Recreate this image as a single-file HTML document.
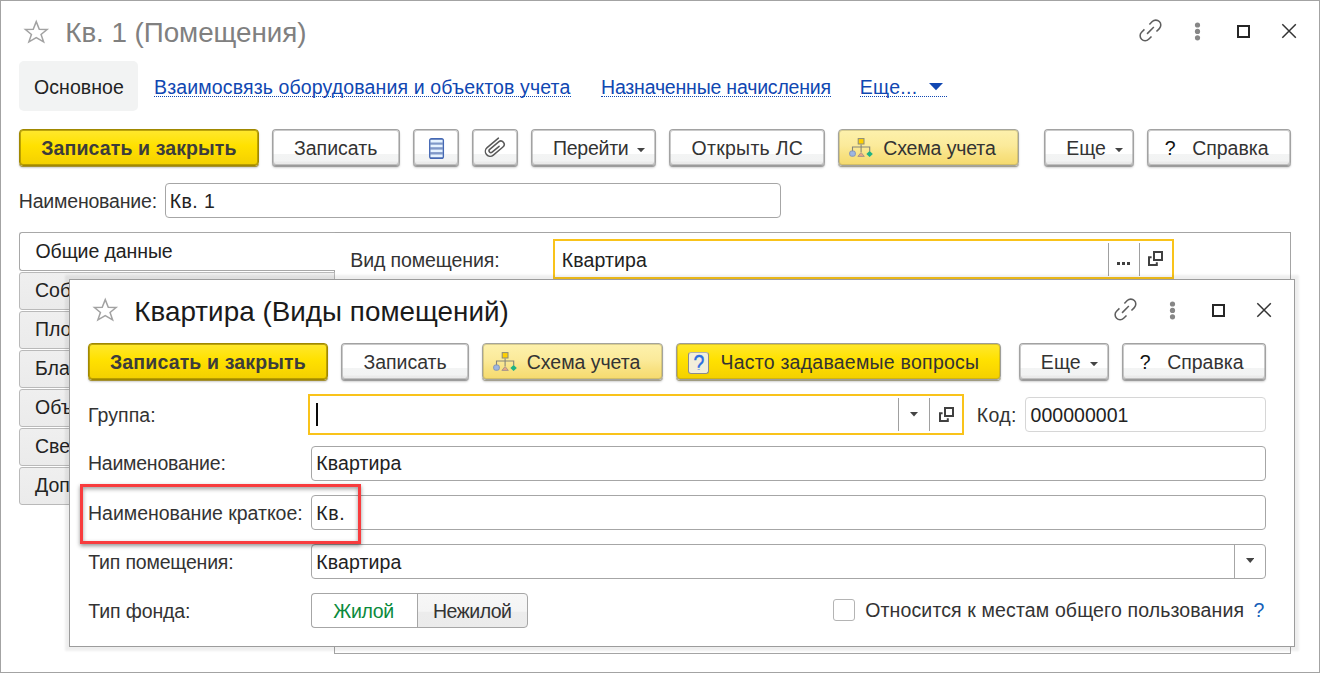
<!DOCTYPE html>
<html lang="ru">
<head>
<meta charset="utf-8">
<title>Кв. 1 (Помещения)</title>
<style>
*{box-sizing:border-box;margin:0;padding:0}
html,body{width:1320px;height:673px;overflow:hidden;background:#fff}
body{font-family:"Liberation Sans",sans-serif;font-size:19.5px;color:#333;position:relative}
.a{position:absolute}
.t{position:absolute;white-space:nowrap;line-height:1;font-size:19.5px}
.t.b{font-weight:bold}
.t.tt{font-size:27.8px}
.frame{position:absolute;left:0;top:0;width:1320px;height:673px;border:1px solid #a3a3a3}
.btn{position:absolute;height:37px;border:1px solid #a2a2a2;border-bottom-color:#9a9a9a;border-radius:4px;background:linear-gradient(#fff 0,#fff 24px,#f3f4f4 24px,#f2f3f3 31px,#ebebeb 32px,#eaeaea 100%);box-shadow:inset 0 0 0 1px rgba(150,150,150,.5),0 1px 0 #9c9c9c,0 2px 2px rgba(0,0,0,.18)}
.btn.y{background:linear-gradient(#ffe82e 0,#ffe100 45%,#fbd900 70%,#f2d000 100%);border-color:#a08800;box-shadow:inset 0 0 0 1px rgba(160,136,0,.7),0 1px 0 #a49030,0 2px 2px rgba(0,0,0,.2)}
.btn.ly{background:linear-gradient(#fdf1ad 0,#fbea9a 45%,#f8e283 70%,#f5da6e 100%);border-color:#a4a49c;box-shadow:inset 0 0 0 1px rgba(150,140,90,.35),0 1px 0 #a4a090,0 2px 2px rgba(0,0,0,.18)}
.btn.y2{background:linear-gradient(#ffe82e 0,#ffe100 45%,#fbd900 70%,#f2d000 100%);border-color:#9e9e98;box-shadow:inset 0 0 0 1px rgba(150,130,40,.35),0 1px 0 #a09c80,0 2px 2px rgba(0,0,0,.18)}
.inp{position:absolute;border:1px solid #a6a6a6;border-radius:4px;background:#fff}
.inp.f{border:2px solid #f9c31a;border-radius:0}
.vt{position:absolute;left:19px;width:316px;height:38px;border:1px solid #b9b9b9;border-radius:3px 0 0 3px;background:linear-gradient(#efefef,#ebebeb)}
.sep{position:absolute;width:1px;background:#a0a0a0}
.dlg{position:absolute;left:69px;top:279px;width:1226px;height:368px;background:#fff;border:1px solid #9c9c9c;box-shadow:0 0 2px 4px rgba(0,0,0,.065)}
</style>
</head>
<body>
<div class="frame"></div>

<svg class="a" style="left:20px;top:15px" width="32" height="32" viewBox="20 15 32 32"><path d="M36.25 21.64 L39.27 29.29 L47.09 29.47 L41.06 34.51 L43.59 41.80 L36.25 37.57 L28.91 41.80 L31.43 34.51 L25.41 29.47 L33.23 29.29 Z" fill="none" stroke="#a2a2a2" stroke-width="1.5" stroke-linejoin="miter"/></svg>
<div class="t tt" style="left:65.25px;top:19.0px;color:#808080;letter-spacing:-0.047px">Кв. 1 (Помещения)</div>
<svg class="a" style="left:1130px;top:10px" width="180" height="40" viewBox="1130 10 180 40">
<g transform="translate(1150.45 30.45) rotate(-45)" fill="none" stroke="#5e5e5e" stroke-width="1.55">
<path d="M3.5 -5 L7.55 -5 A5 5 0 0 1 7.55 5 L3.5 5"/>
<path d="M-3.5 5 L-7.55 5 A5 5 0 0 1 -7.55 -5 L-3.5 -5"/>
<path d="M-4.8 0 L4.8 0"/>
</g>
<circle cx="1197.5" cy="25" r="2.6" fill="#868686"/><circle cx="1197.5" cy="31.4" r="2.6" fill="#868686"/><circle cx="1197.5" cy="37.8" r="2.6" fill="#868686"/>
<rect x="1238" y="26" width="11" height="11" fill="none" stroke="#262626" stroke-width="2"/>
<path d="M1282.3 24.2 L1295.8 37.7 M1295.8 24.2 L1282.3 37.7" stroke="#333" stroke-width="1.5" fill="none"/>
</svg>
<div class="a" style="left:19px;top:61px;width:119px;height:50px;background:#f2f3f3;border-radius:5px"></div>
<div class="t" style="left:34.0px;top:78.0px;color:#222;letter-spacing:0.071px">Основное</div>
<div class="t" style="left:154.0px;top:78.0px;color:#1047b2;letter-spacing:0.138px">Взаимосвязь оборудования и объектов учета</div>
<div class="a" style="left:154px;top:96px;width:417px;height:0;border-top:1px dotted #1047b2"></div>
<div class="t" style="left:601.0px;top:78.0px;color:#1047b2;letter-spacing:-0.19px">Назначенные начисления</div>
<div class="a" style="left:601px;top:96px;width:230px;height:0;border-top:1px dotted #1047b2"></div>
<div class="t" style="left:859.75px;top:78.0px;color:#1047b2;letter-spacing:0.3px">Еще...</div>
<div class="a" style="left:860px;top:96px;width:87px;height:0;border-top:1px dotted #1047b2"></div>
<svg class="a" style="left:928.5px;top:83px" width="14" height="7.7" viewBox="0 0 14 7.7"><path d="M0 0 H14 L7.0 7.2 Z" fill="#1047b2"/></svg>
<div class="btn y" style="left:19px;top:129px;width:240px"></div>
<div class="btn " style="left:272px;top:129px;width:128px"></div>
<div class="btn " style="left:413px;top:129px;width:46px"></div>
<div class="btn " style="left:472px;top:129px;width:46px"></div>
<div class="btn " style="left:531px;top:129px;width:125px"></div>
<div class="btn " style="left:669px;top:129px;width:156px"></div>
<div class="btn ly" style="left:838px;top:129px;width:181px"></div>
<div class="btn " style="left:1044px;top:129px;width:90px"></div>
<div class="btn " style="left:1147px;top:129px;width:144px"></div>
<div class="t b" style="left:41.25px;top:139.0px;color:#3c3c3c;letter-spacing:0.118px">Записать и закрыть</div>
<div class="t" style="left:294.0px;top:139.0px;color:#333">Записать</div>
<div class="t" style="left:553.0px;top:139.0px;color:#333;letter-spacing:-0.25px">Перейти</div>
<div class="t" style="left:691.5px;top:139.0px;color:#333;letter-spacing:0.278px">Открыть ЛС</div>
<div class="t" style="left:883.25px;top:139.0px;color:#333;letter-spacing:-0.125px">Схема учета</div>
<div class="t" style="left:1066.3px;top:139.0px;color:#333;letter-spacing:-0.05px">Еще</div>
<div class="t" style="left:1164.75px;top:139.0px;color:#111">?</div>
<div class="t" style="left:1192.25px;top:139.0px;color:#333;letter-spacing:-0.042px">Справка</div>
<svg class="a" style="left:636.8px;top:147.7px" width="8" height="4.7" viewBox="0 0 8 4.7"><path d="M0 0 H8 L4.0 4.2 Z" fill="#444"/></svg>
<svg class="a" style="left:1115px;top:147.7px" width="8" height="4.7" viewBox="0 0 8 4.7"><path d="M0 0 H8 L4.0 4.2 Z" fill="#444"/></svg>
<svg class="a" style="left:848px;top:137px" width="26" height="21" viewBox="848 137.5 26 21">
<path d="M861.1 145 V152.5 M852.5 152 V147.5 H869.7 V152" fill="none" stroke="#86867a" stroke-width="1.1"/>
<rect x="858.2" y="139.1" width="5.8" height="5.4" fill="#ffd000" stroke="#8a8a78" stroke-width="1"/>
<rect x="849.7" y="151.5" width="5.6" height="5.2" rx="1.8" fill="#9db6e2" stroke="#8494b4" stroke-width="1"/>
<path d="M861.1 153 L864.3 156.9 H857.9 Z" fill="#e9a484" stroke="#a8988a" stroke-width="1"/>
<path d="M869.6 151.6 L872.8 154.5 L869.6 157.4 L866.4 154.5 Z" fill="#1fb283"/>
</svg>
<svg class="a" style="left:428px;top:137px" width="17" height="23" viewBox="428 137 17 23">
<rect x="429.6" y="138.6" width="13.9" height="19.8" rx="2" fill="#7f98c8" stroke="#4468b4" stroke-width="1.1"/>
<g fill="#e6f3ff"><rect x="430.6" y="140" width="11.9" height="2.5"/><rect x="430.6" y="144.7" width="11.9" height="2.5"/><rect x="430.6" y="149.6" width="11.9" height="2.5"/><rect x="430.6" y="154.5" width="11.9" height="2.5"/></g>
</svg>
<svg class="a" style="left:480px;top:133px" width="30" height="28" viewBox="480 133 30 28">
<g transform="translate(494.7 147.6) rotate(-40) scale(.93)" fill="none" stroke="#585858" stroke-width="1.6" stroke-linecap="round">
<path d="M9.6 -5.2 L-6.3 -5.2 A5.2 5.2 0 0 0 -6.3 5.2 L7.2 5.2 A3.6 3.6 0 0 0 7.2 -2 L-5.3 -2 A2 2 0 0 0 -5.3 2 L4.5 2"/>
</g></svg>
<div class="t" style="left:18.75px;top:191.5px;color:#333;letter-spacing:-0.188px">Наименование:</div>
<div class="inp" style="left:165px;top:183px;width:616px;height:35px"></div>
<div class="t" style="left:169.75px;top:191.5px;color:#222;letter-spacing:0.438px">Кв. 1</div>
<div class="a" style="left:334px;top:232px;width:957px;height:422px;border:1px solid #a4a4a4;border-left:none"></div>
<div class="a" style="left:19px;top:232px;width:316px;height:39px;border:1px solid #a8a8a8;border-right:none;border-radius:3px 0 0 3px"></div>
<div class="a" style="left:334px;top:271px;width:1px;height:383px;background:#a4a4a4"></div>
<div class="vt" style="top:272px"></div>
<div class="vt" style="top:311px"></div>
<div class="vt" style="top:350px"></div>
<div class="vt" style="top:389px"></div>
<div class="vt" style="top:428px"></div>
<div class="vt" style="top:467px"></div>
<div class="t" style="left:35.0px;top:280.8px;color:#222">Соб</div>
<div class="t" style="left:35.0px;top:319.8px;color:#222">Пло</div>
<div class="t" style="left:35.0px;top:358.8px;color:#222">Бла</div>
<div class="t" style="left:35.0px;top:397.8px;color:#222">Объ</div>
<div class="t" style="left:35.0px;top:436.8px;color:#222">Све</div>
<div class="t" style="left:35.1px;top:475.8px;color:#222">Доп</div>
<div class="t" style="left:35.5px;top:242.0px;color:#222;letter-spacing:-0.091px">Общие данные</div>
<div class="t" style="left:350.25px;top:250.75px;color:#333;letter-spacing:-0.096px">Вид помещения:</div>
<div class="inp f" style="left:553px;top:239px;width:621px;height:40px"></div>
<div class="t" style="left:561.75px;top:250.75px;color:#222;letter-spacing:0.107px">Квартира</div>
<div class="sep" style="left:1108px;top:243px;height:33px"></div><div class="sep" style="left:1139px;top:243px;height:33px"></div>
<div class="a" style="left:1117px;top:262.4px;width:2.6px;height:2.6px;background:#404040"></div><div class="a" style="left:1122.2px;top:262.4px;width:2.6px;height:2.6px;background:#404040"></div><div class="a" style="left:1127.4px;top:262.4px;width:2.6px;height:2.6px;background:#404040"></div>
<svg class="a" style="left:1148.2px;top:251px" width="16" height="16" viewBox="0 0 16 16"><rect x="6" y="1" width="8" height="8" fill="none" stroke="#404040" stroke-width="2"/><path d="M3.6 6.2 H1 V14 H8.8 V11.3" fill="none" stroke="#404040" stroke-width="2"/></svg>
<div class="dlg"></div>
<svg class="a" style="left:89.25px;top:293.2px" width="32" height="32" viewBox="20 15 32 32"><path d="M36.25 21.64 L39.27 29.29 L47.09 29.47 L41.06 34.51 L43.59 41.80 L36.25 37.57 L28.91 41.80 L31.43 34.51 L25.41 29.47 L33.23 29.29 Z" fill="none" stroke="#a2a2a2" stroke-width="1.5" stroke-linejoin="miter"/></svg>
<div class="t tt" style="left:134.25px;top:298.0px;color:#1a1a1a;letter-spacing:0.031px">Квартира (Виды помещений)</div>
<svg class="a" style="left:1105px;top:289px" width="180" height="40" viewBox="1130 10 180 40">
<g transform="translate(1150.45 30.45) rotate(-45)" fill="none" stroke="#5e5e5e" stroke-width="1.55">
<path d="M3.5 -5 L7.55 -5 A5 5 0 0 1 7.55 5 L3.5 5"/>
<path d="M-3.5 5 L-7.55 5 A5 5 0 0 1 -7.55 -5 L-3.5 -5"/>
<path d="M-4.8 0 L4.8 0"/>
</g>
<circle cx="1197.5" cy="25" r="2.6" fill="#868686"/><circle cx="1197.5" cy="31.4" r="2.6" fill="#868686"/><circle cx="1197.5" cy="37.8" r="2.6" fill="#868686"/>
<rect x="1238" y="26" width="11" height="11" fill="none" stroke="#262626" stroke-width="2"/>
<path d="M1282.3 24.2 L1295.8 37.7 M1295.8 24.2 L1282.3 37.7" stroke="#333" stroke-width="1.5" fill="none"/>
</svg>
<div class="btn y" style="left:88px;top:343px;width:240px"></div>
<div class="btn " style="left:341px;top:343px;width:128px"></div>
<div class="btn ly" style="left:482px;top:343px;width:181px"></div>
<div class="btn y2" style="left:676px;top:343px;width:325px"></div>
<div class="btn " style="left:1019px;top:343px;width:90px"></div>
<div class="btn " style="left:1122px;top:343px;width:144px"></div>
<div class="t b" style="left:110.0px;top:352.5px;color:#3c3c3c;letter-spacing:0.147px">Записать и закрыть</div>
<div class="t" style="left:363.5px;top:352.5px;color:#333;letter-spacing:-0.036px">Записать</div>
<div class="t" style="left:526.75px;top:352.5px;color:#333;letter-spacing:-0.025px">Схема учета</div>
<div class="t" style="left:720.4px;top:352.5px;color:#333;letter-spacing:0.243px">Часто задаваемые вопросы</div>
<div class="t" style="left:1040.75px;top:352.5px;color:#333;letter-spacing:0.125px">Еще</div>
<div class="t" style="left:1139.75px;top:352.5px;color:#111">?</div>
<div class="t" style="left:1167.25px;top:352.5px;color:#333;letter-spacing:-0.042px">Справка</div>
<svg class="a" style="left:1090px;top:361.7px" width="8" height="4.7" viewBox="0 0 8 4.7"><path d="M0 0 H8 L4.0 4.2 Z" fill="#444"/></svg>
<svg class="a" style="left:492px;top:351px" width="26" height="21" viewBox="848 137.5 26 21">
<path d="M861.1 145 V152.5 M852.5 152 V147.5 H869.7 V152" fill="none" stroke="#86867a" stroke-width="1.1"/>
<rect x="858.2" y="139.1" width="5.8" height="5.4" fill="#ffd000" stroke="#8a8a78" stroke-width="1"/>
<rect x="849.7" y="151.5" width="5.6" height="5.2" rx="1.8" fill="#9db6e2" stroke="#8494b4" stroke-width="1"/>
<path d="M861.1 153 L864.3 156.9 H857.9 Z" fill="#e9a484" stroke="#a8988a" stroke-width="1"/>
<path d="M869.6 151.6 L872.8 154.5 L869.6 157.4 L866.4 154.5 Z" fill="#1fb283"/>
</svg>
<div class="a" style="left:688px;top:351.5px;width:21px;height:22.5px;border:1px solid #8c8c8c;border-top-color:#b0b0b0;border-radius:3px;background:#f2eedb"></div>
<div class="a" style="left:690px;top:352px;width:17px;height:17.6px;overflow:hidden"><div class="t" style="left:3.4px;top:0.2px;font-size:19.5px;color:#2b6fe0;-webkit-text-stroke:.3px #2b6fe0;transform:scale(1,1.27);transform-origin:0 0">?</div></div>
<div class="t" style="left:88.0px;top:405.5px;color:#333;letter-spacing:0.083px">Группа:</div>
<div class="inp f" style="left:308px;top:394px;width:656px;height:41px"></div>
<div class="a" style="left:316.4px;top:402.8px;width:2px;height:23px;background:#0a0a0a"></div>
<div class="sep" style="left:898px;top:398px;height:33px"></div><div class="sep" style="left:929px;top:398px;height:33px"></div>
<svg class="a" style="left:910px;top:411.8px" width="8" height="5.1" viewBox="0 0 8 5.1"><path d="M0 0 H8 L4.0 4.6 Z" fill="#444"/></svg>
<svg class="a" style="left:938.5px;top:406.5px" width="16" height="16" viewBox="0 0 16 16"><rect x="6" y="1" width="8" height="8" fill="none" stroke="#404040" stroke-width="2"/><path d="M3.6 6.2 H1 V14 H8.8 V11.3" fill="none" stroke="#404040" stroke-width="2"/></svg>
<div class="t" style="left:976.75px;top:405.5px;color:#333;letter-spacing:0.333px">Код:</div>
<div class="inp" style="left:1025px;top:397px;width:241px;height:35px;border-color:#d6d6d6"></div>
<div class="t" style="left:1030.5px;top:405.75px;color:#222;letter-spacing:0.031px">000000001</div>
<div class="t" style="left:87.9px;top:454.0px;color:#333;letter-spacing:-0.221px">Наименование:</div>
<div class="inp" style="left:311px;top:446px;width:955px;height:35px"></div>
<div class="t" style="left:316.25px;top:454.0px;color:#222;letter-spacing:0.107px">Квартира</div>
<div class="t" style="left:88.0px;top:503.5px;color:#333;letter-spacing:-0.025px">Наименование краткое:</div>
<div class="inp" style="left:311px;top:495px;width:955px;height:35px"></div>
<div class="t" style="left:316.25px;top:503.5px;color:#222;letter-spacing:0.625px">Кв.</div>
<div class="t" style="left:88.25px;top:553.0px;color:#333;letter-spacing:-0.192px">Тип помещения:</div>
<div class="inp" style="left:311px;top:544px;width:955px;height:35px"></div>
<div class="sep" style="left:1234px;top:545px;height:33px;background:#a6a6a6"></div>
<svg class="a" style="left:1245.5px;top:558px" width="8.4" height="5.5" viewBox="0 0 8.4 5.5"><path d="M0 0 H8.4 L4.2 5 Z" fill="#444"/></svg>
<div class="t" style="left:316.25px;top:553.0px;color:#222;letter-spacing:0.107px">Квартира</div>
<div class="t" style="left:88.25px;top:601.75px;color:#333;letter-spacing:-0.111px">Тип фонда:</div>
<div class="inp" style="left:311px;top:593px;width:107px;height:35px;border-radius:4px 0 0 4px;border-right:none"></div>
<div class="inp" style="left:417px;top:593px;width:111px;height:35px;border-radius:0 4px 4px 0;background:linear-gradient(#f7f7f7 0,#f4f4f4 52%,#ececec 56%,#ebebeb 100%)"></div>
<div class="t" style="left:333.25px;top:601.75px;color:#0a8a3c;letter-spacing:-0.312px">Жилой</div>
<div class="t" style="left:433.0px;top:601.75px;color:#333;letter-spacing:-0.5px">Нежилой</div>
<div class="inp" style="left:833px;top:599px;width:22px;height:22px;border-color:#b4b4b4;border-radius:3px"></div>
<div class="t" style="left:865.25px;top:600.75px;color:#333;letter-spacing:0.132px">Относится к местам общего пользования</div>
<div class="t" style="left:1253.5px;top:600.75px;color:#1560b8">?</div>
<div class="a" style="left:80px;top:484px;width:281px;height:60px;border:3px solid #f83c3e;box-shadow:0 2px 4px rgba(0,0,0,.42),inset 0 2px 4px rgba(0,0,0,.38)"></div>
</body>
</html>
